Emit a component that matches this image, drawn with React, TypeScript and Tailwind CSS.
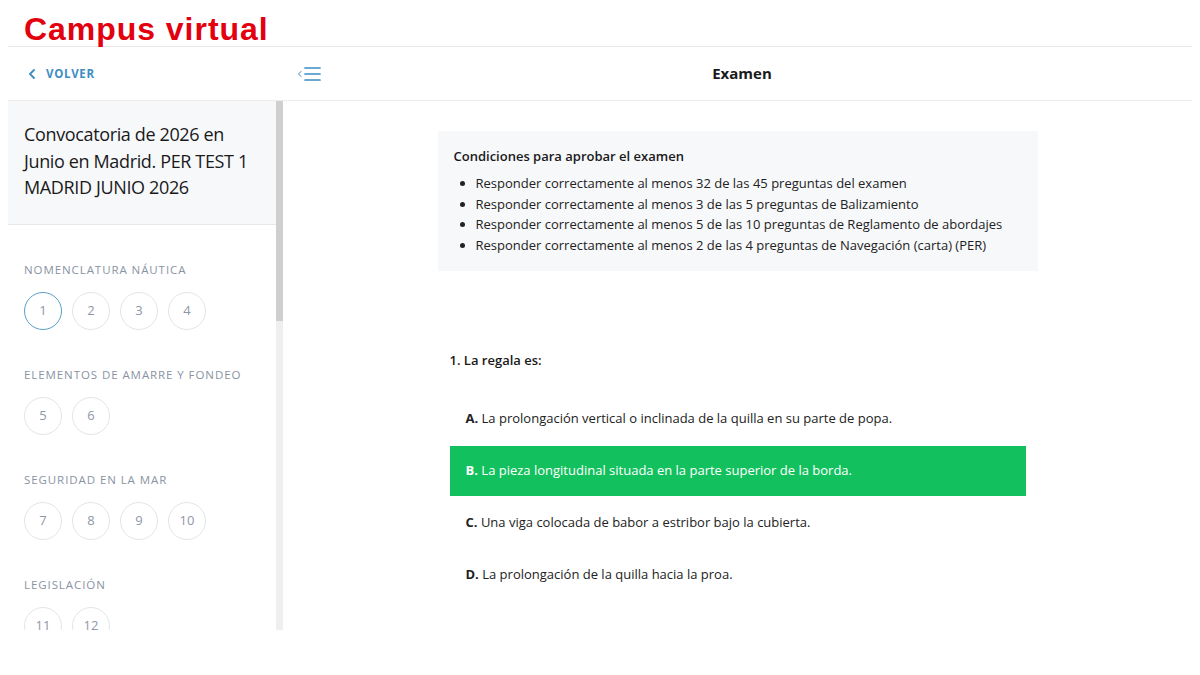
import React from "react";

const sections = [
  { name: "NOMENCLATURA NÁUTICA", nums: [1, 2, 3, 4] },
  { name: "ELEMENTOS DE AMARRE Y FONDEO", nums: [5, 6] },
  { name: "SEGURIDAD EN LA MAR", nums: [7, 8, 9, 10] },
  { name: "LEGISLACIÓN", nums: [11, 12] },
];

const conditions = [
  "Responder correctamente al menos 32 de las 45 preguntas del examen",
  "Responder correctamente al menos 3 de las 5 preguntas de Balizamiento",
  "Responder correctamente al menos 5 de las 10 preguntas de Reglamento de abordajes",
  "Responder correctamente al menos 2 de las 4 preguntas de Navegación (carta) (PER)",
];

const options = [
  { l: "A.", t: "La prolongación vertical o inclinada de la quilla en su parte de popa." },
  { l: "B.", t: "La pieza longitudinal situada en la parte superior de la borda.", sel: true },
  { l: "C.", t: "Una viga colocada de babor a estribor bajo la cubierta." },
  { l: "D.", t: "La prolongación de la quilla hacia la proa." },
];

export default function App() {
  return (
    <div
      className="w-[1200px] h-[675px] bg-white overflow-hidden text-[#1a1a1a]"
      style={{ fontFamily: '"Open Sans", "Noto Sans", sans-serif' }}
    >
      <div className="h-[46px] pl-[24px] flex items-end">
        <div
          className="text-[#e3000f] text-[32px] font-bold leading-none pb-[1px] tracking-[0.03em]"
          style={{ fontFamily: '"Liberation Sans", Arial, sans-serif' }}
        >
          Campus virtual
        </div>
      </div>
      <div className="mx-[8px] border-t border-[#e8e8e8] h-[584px] flex flex-col">
        <div className="h-[54px] flex items-center border-b border-[#ececec] shrink-0">
          <div className="w-[275px] pl-[20px] flex items-center gap-[10px] text-[#3d8dc4]">
            <svg width="8" height="10" viewBox="0 0 8 10" fill="none">
              <path d="M6 1 L2 5 L6 9" stroke="currentColor" strokeWidth="1.8" strokeLinecap="round" strokeLinejoin="round" />
            </svg>
            <span className="text-[11.5px] font-bold tracking-[0.06em]">VOLVER</span>
          </div>
          <div className="flex-1 relative flex items-center justify-center pl-[9px]">
            <div className="absolute left-[14px] top-1/2 -translate-y-1/2 text-[#3d8dc4]">
              <svg width="24" height="16" viewBox="0 0 24 16" fill="none">
                <path d="M4 5.5 L1.5 8 L4 10.5" stroke="currentColor" strokeWidth="1" strokeLinecap="round" strokeLinejoin="round" />
                <path d="M8 2 H23 M8 8 H23 M8 14 H23" stroke="currentColor" strokeWidth="1.7" strokeLinecap="round" />
              </svg>
            </div>
            <span className="text-[15px] font-bold text-[#1a1a1a]">Examen</span>
          </div>
        </div>
        <div className="flex flex-1 min-h-0">
          <div className="w-[275px] flex shrink-0 min-h-0">
            <div className="w-[268px] flex flex-col overflow-hidden">
              <div className="bg-[#f7f8fa] border-b border-[#e6e8ec] pl-[16px] pr-[12px] pt-[20px] pb-[22px] h-[124px] shrink-0">
                <div className="text-[18px] leading-[26.5px] text-[#1a1a1a] font-medium w-[236px] tracking-[-0.02em]">
                  Convocatoria de 2026 en Junio en Madrid. PER TEST 1 MADRID JUNIO 2026
                </div>
              </div>
              <div className="pl-[16px] pt-[37px] flex flex-col gap-[37px]">
                {sections.map((s) => (
                  <div key={s.name} className="flex flex-col gap-[14px]">
                    <div className="text-[11.5px] tracking-[0.08em] text-[#8a93a3] leading-[16px] font-medium">{s.name}</div>
                    <div className="flex gap-[10px]">
                      {s.nums.map((n) => (
                        <div
                          key={n}
                          className={
                            "w-[38px] h-[38px] rounded-full border flex items-center justify-center text-[13px] text-[#8f97a5] " +
                            (n === 1 ? "border-[#5aa0c8]" : "border-[#e3e5e9]")
                          }
                        >
                          {n}
                        </div>
                      ))}
                    </div>
                  </div>
                ))}
              </div>
            </div>
            <div className="w-[7px] bg-[#efefef] flex flex-col">
              <div className="h-[220px] bg-[#cfcfcf]" />
            </div>
          </div>
          <div className="flex-1 flex flex-col items-center pt-[30px]">
            <div className="w-[600px]">
              <div className="bg-[#f7f8fa] px-[16px] pt-[16px] pb-[16px] h-[140px]">
                <div className="text-[13px] font-semibold leading-[18px]">Condiciones para aprobar el examen</div>
                <ul className="mt-[8px] list-disc pl-[22px] text-[13px] leading-[20.5px] text-[#222]">
                  {conditions.map((c) => (
                    <li key={c}>{c}</li>
                  ))}
                </ul>
              </div>
              <div className="px-[12px] pt-[80px]">
                <div className="text-[13px] font-semibold leading-[18px]">1. La regala es:</div>
                <div className="mt-[25px] flex flex-col gap-[2px]">
                  {options.map((o) => (
                    <div
                      key={o.l}
                      className={
                        "h-[50px] flex items-center px-[16px] text-[13px] " +
                        (o.sel ? "bg-[#13c05e] text-white" : "text-[#222]")
                      }
                    >
                      <span className="font-bold">{o.l}</span>&nbsp;{o.t}
                    </div>
                  ))}
                </div>
              </div>
            </div>
          </div>
        </div>
      </div>
    </div>
  );
}
